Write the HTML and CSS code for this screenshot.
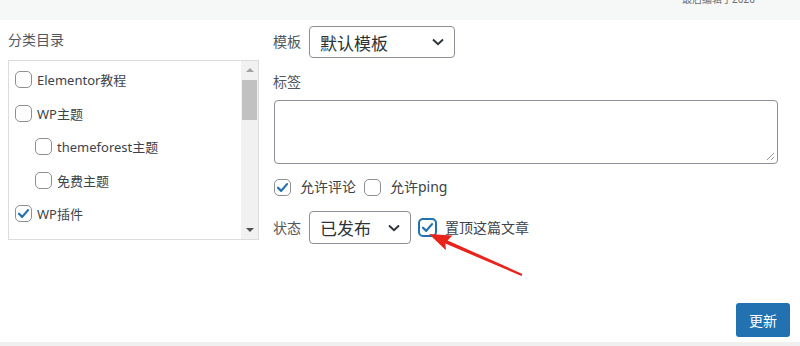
FILE: index.html
```html
<!DOCTYPE html>
<html lang="zh-CN">
<head>
    <meta charset="UTF-8">
    <title>文章设置</title>
    <link rel="stylesheet" href="styles.css">
</head>
<body>
    <div class="topbar"><span class="edited">最后编辑于2020</span></div>

    <div class="panel">
        <div class="cats">
            <div class="cats-title">分类目录</div>
            <div class="cats-box">
                <ul class="cats-list">
                    <li><span class="cb"></span>Elementor教程</li>
                    <li><span class="cb"></span>WP主题</li>
                    <li class="child"><span class="cb"></span>themeforest主题</li>
                    <li class="child"><span class="cb"></span>免费主题</li>
                    <li><span class="cb checked"><svg viewBox="0 0 16 16"><polyline points="3.2,8.3 6.6,11.6 12.8,4.4"/></svg></span>WP插件</li>
                </ul>
                <div class="scrollbar">
                    <span class="arrow up"></span>
                    <span class="thumb"></span>
                    <span class="track"></span>
                    <span class="arrow down"></span>
                </div>
            </div>
        </div>

        <div class="fields">
            <div class="row">
                <span class="lbl">模板</span>
                <div class="select select-tpl">
                    <span>默认模板</span>
                    <svg class="chev" viewBox="0 0 12 8"><polyline points="1,1.5 6,6.2 11,1.5"/></svg>
                </div>
            </div>

            <div class="lbl tags-lbl">标签</div>
            <div class="textarea">
                <svg class="grip" viewBox="0 0 10 10"><line x1="2" y1="9" x2="9" y2="2"/><line x1="6" y1="9" x2="9" y2="6"/></svg>
            </div>

            <div class="row checks">
                <span class="cb checked"><svg viewBox="0 0 16 16"><polyline points="3.2,8.3 6.6,11.6 12.8,4.4"/></svg></span>
                <span class="opt">允许评论</span>
                <span class="cb"></span>
                <span class="opt">允许ping</span>
            </div>

            <div class="row status">
                <span class="lbl">状态</span>
                <div class="select select-status">
                    <span>已发布</span>
                    <svg class="chev" viewBox="0 0 12 8"><polyline points="1,1.5 6,6.2 11,1.5"/></svg>
                </div>
                <span class="cb checked focus"><svg viewBox="0 0 16 16"><polyline points="3.2,8.3 6.6,11.6 12.8,4.4"/></svg></span>
                <span class="opt">置顶这篇文章</span>
            </div>
        </div>
    </div>

    <div class="actions">
        <button type="button" class="btn-update">更新</button>
    </div>
    <div class="bottom-line"></div>

    <!-- annotation arrow -->
    <svg class="pointer" viewBox="0 0 800 346">
        <polygon points="429,234 452.3,235.6 447.6,240.4 522.4,273.9 521.6,275.9 445.4,243.6 445.9,250.2"/>
    </svg>
</body>
</html>
```

FILE: styles.css
```css
* { margin: 0; padding: 0; box-sizing: border-box; }
body {
    font-family: "Noto Sans", "Noto Sans CJK SC", sans-serif;
    font-size: 14px;
    color: #3c434a;
    background-color: #fff;
    width: 800px;
    height: 346px;
    overflow: hidden;
    position: relative;
}
.topbar {
    height: 20px;
    background-color: #f6f7f7;
    overflow: hidden;
    padding-right: 45px;
}
.edited {
    display: block;
    margin-top: -7px;
    text-align: right;
    font-size: 10px;
    line-height: 13px;
    color: #6c7176;
}
.panel {
    display: flex;
    padding: 6px 0 0 8px;
    gap: 14px;
}
.cats { width: 251px; }
.cats-title {
    margin-top: 4px;
    line-height: 20px;
    color: #50575e;
    margin-bottom: 10px;
}
.cats-box {
    display: flex;
    height: 180px;
    border: 1px solid #dcdcde;
}
.cats-list {
    flex: 1;
    list-style: none;
    padding: 2px 0 0 6px;
}
.cats-list li {
    display: flex;
    align-items: center;
    height: 33.5px;
    color: #3c434a;
    font-size: 13px;
}
.cats-list li.child { padding-left: 20px; }
.cb {
    flex: none;
    width: 17px;
    height: 17px;
    border: 1px solid #8c8f94;
    border-radius: 5px;
    background-color: #fff;
    margin-right: 5px;
    display: inline-flex;
}
.cb svg {
    width: 100%;
    height: 100%;
}
.cb polyline {
    fill: none;
    stroke: #2271b1;
    stroke-width: 2.4;
    stroke-linecap: round;
    stroke-linejoin: round;
}
.cb.focus {
    width: 19px;
    height: 19px;
    border: 2px solid #2271b1;
    margin-left: 7px;
    margin-right: 8px;
}
.scrollbar {
    width: 17px;
    background-color: #f1f1f1;
    display: flex;
    flex-direction: column;
    align-items: center;
}
.arrow {
    width: 0;
    height: 0;
    border-left: 4px solid transparent;
    border-right: 4px solid transparent;
}
.arrow.up {
    border-bottom: 4px solid #a3a3a3;
    margin: 7px 0 8px;
}
.arrow.down {
    border-top: 4px solid #505050;
    margin: 0 0 7px;
}
.thumb {
    width: 15px;
    height: 40px;
    background-color: #c1c1c1;
}
.track { flex: 1; }

.fields {
    width: 505px;
    display: flex;
    flex-direction: column;
}
.row {
    display: flex;
    align-items: center;
}
.lbl {
    line-height: 20px;
    color: #50575e;
}
.row .lbl { width: 36px; }
.select {
    height: 32px;
    border: 1px solid #8c8f94;
    border-radius: 4px;
    display: flex;
    align-items: center;
    justify-content: space-between;
    padding: 0 10px 0 10px;
    font-size: 17px;
    color: #2c3338;
}
.select-tpl { width: 146px; }
.select-status { width: 102px; height: 33px; }
.chev {
    width: 12px;
    height: 8px;
}
.chev polyline {
    fill: none;
    stroke: #2c3338;
    stroke-width: 1.9;
}
.tags-lbl { margin-top: 14px; }
.textarea {
    margin-top: 8px;
    margin-left: 1px;
    width: 504px;
    height: 64px;
    border: 1px solid #8c8f94;
    border-radius: 4px;
    display: flex;
    justify-content: flex-end;
    align-items: flex-end;
    padding: 0 2px 2px 0;
}
.grip {
    width: 10px;
    height: 10px;
}
.grip line {
    stroke: #9a9a9a;
    stroke-width: 1;
}
.checks {
    margin-top: 13px;
    padding-left: 1px;
}
.checks .cb { margin-right: 9px; }
.opt {
    color: #3c434a;
    line-height: 20px;
    margin-right: 8px;
}
.status { margin-top: 14px; }
.actions {
    display: flex;
    justify-content: flex-end;
    padding-right: 10px;
    margin-top: 59px;
}
.btn-update {
    width: 54px;
    height: 34px;
    background-color: #2271b1;
    color: #fff;
    border: none;
    border-radius: 3px;
    font-family: "Noto Sans", "Noto Sans CJK SC", sans-serif;
    font-size: 14px;
}
.bottom-line {
    margin-top: 5px;
    height: 4px;
    background-color: #f0f0f1;
}
.pointer {
    position: absolute;
    left: 0;
    top: 0;
    width: 800px;
    height: 346px;
    pointer-events: none;
}
.pointer polygon { fill: #e8231b; }
```
